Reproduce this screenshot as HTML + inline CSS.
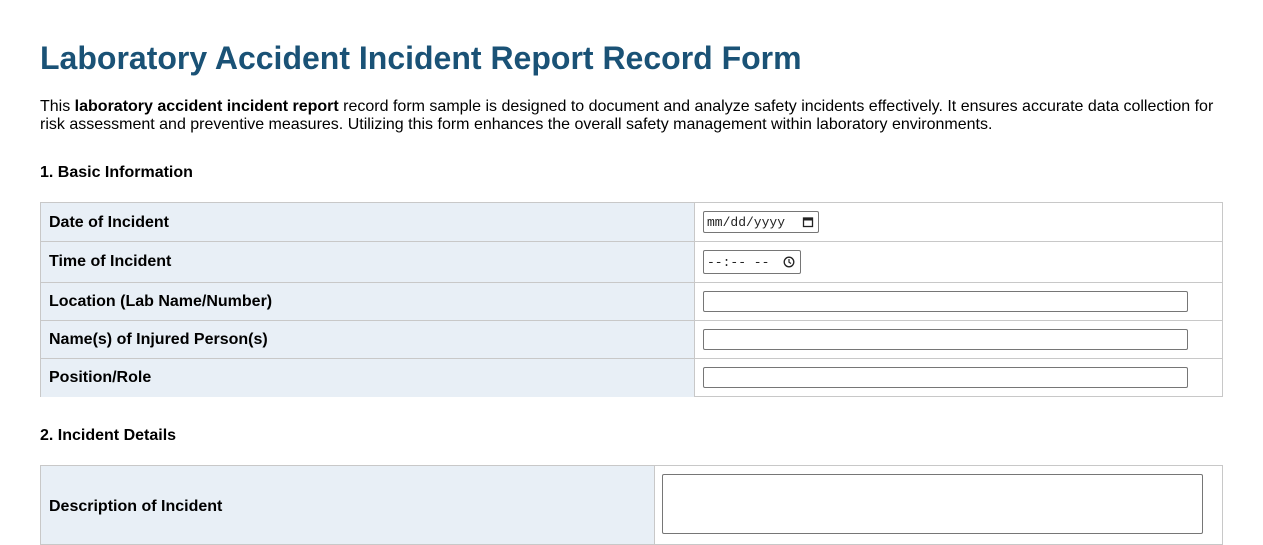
<!DOCTYPE html>
<html><head><meta charset="utf-8"><style>
body{margin:0;width:1263px;height:515px;overflow:hidden;background:#fff;font-family:"Liberation Sans",Arial,sans-serif;color:#000;position:relative}
.a{position:absolute}
h1{position:absolute;left:40px;top:40px;margin:0;font-size:32px;font-weight:bold;color:#1a5276;white-space:nowrap}
p{position:absolute;left:40px;top:98px;margin:0;width:1190px;font-size:16px;line-height:18px}
.h{font-weight:bold;font-size:16px}
.tb{position:absolute;border:1px solid #c8c8c8;box-sizing:border-box}
.row{position:absolute;left:0;right:0;border-top:1px solid #c8c8c8}
.lab{position:absolute;left:0;top:0;bottom:0;background:#e8eff6;border-right:1px solid #c8c8c8;font-weight:bold;font-size:16px;padding-left:8px;box-sizing:border-box;display:flex;align-items:center}
.in{position:absolute;border:1px solid #767676;border-radius:2px;box-sizing:border-box;background:#fff;font-family:"Liberation Mono",monospace;font-size:13px;color:#222;display:flex;align-items:center;padding-left:3px}
</style></head><body>
<h1>Laboratory Accident Incident Report Record Form</h1>
<p>This <b>laboratory accident incident report</b> record form sample is designed to document and analyze safety incidents effectively. It ensures accurate data collection for risk assessment and preventive measures. Utilizing this form enhances the overall safety management within laboratory environments.</p>
<div class="a h" style="left:40px;top:164px">1. Basic Information</div>
<div class="tb" style="left:40px;top:202px;width:1183px;height:195px">
 <div class="row" style="top:0px;height:39px;border-top:none"><div class="lab" style="width:654px">Date of Incident</div></div>
 <div class="row" style="top:38px;height:40px"><div class="lab" style="width:654px">Time of Incident</div></div>
 <div class="row" style="top:79px;height:38px"><div class="lab" style="width:654px">Location (Lab Name/Number)</div></div>
 <div class="row" style="top:117px;height:38px"><div class="lab" style="width:654px">Name(s) of Injured Person(s)</div></div>
 <div class="row" style="top:155px;height:38px"><div class="lab" style="width:654px">Position/Role</div></div>
</div>
<div class="in" style="left:703px;top:211px;width:116px;height:22px">mm/dd/yyyy
 <svg class="a" style="left:98px;top:4px" width="12" height="12" viewBox="0 0 12 12"><rect x="1.5" y="2" width="9" height="8.5" fill="none" stroke="#222" stroke-width="1.3"/><rect x="1.5" y="2" width="9" height="2.5" fill="#222"/></svg></div>
<div class="in" style="left:703px;top:250px;width:98px;height:24px">--:-- --
 <svg class="a" style="left:79px;top:5px" width="12" height="12" viewBox="0 0 12 12"><circle cx="6" cy="6" r="4.8" fill="none" stroke="#222" stroke-width="1.3"/><path d="M6 3v3.2l2 1.3" fill="none" stroke="#222" stroke-width="1.2"/></svg></div>
<div class="in" style="left:703px;top:291px;width:485px;height:21px"></div>
<div class="in" style="left:703px;top:329px;width:485px;height:21px"></div>
<div class="in" style="left:703px;top:367px;width:485px;height:21px"></div>
<div class="a h" style="left:40px;top:427px">2. Incident Details</div>
<div class="tb" style="left:40px;top:465px;width:1183px;height:80px">
 <div class="lab" style="width:614px;bottom:0;top:0"><span style="position:absolute;top:32px">Description of Incident</span></div>
</div>
<div class="in" style="left:662px;top:474px;width:541px;height:60px"></div>
</body></html>
